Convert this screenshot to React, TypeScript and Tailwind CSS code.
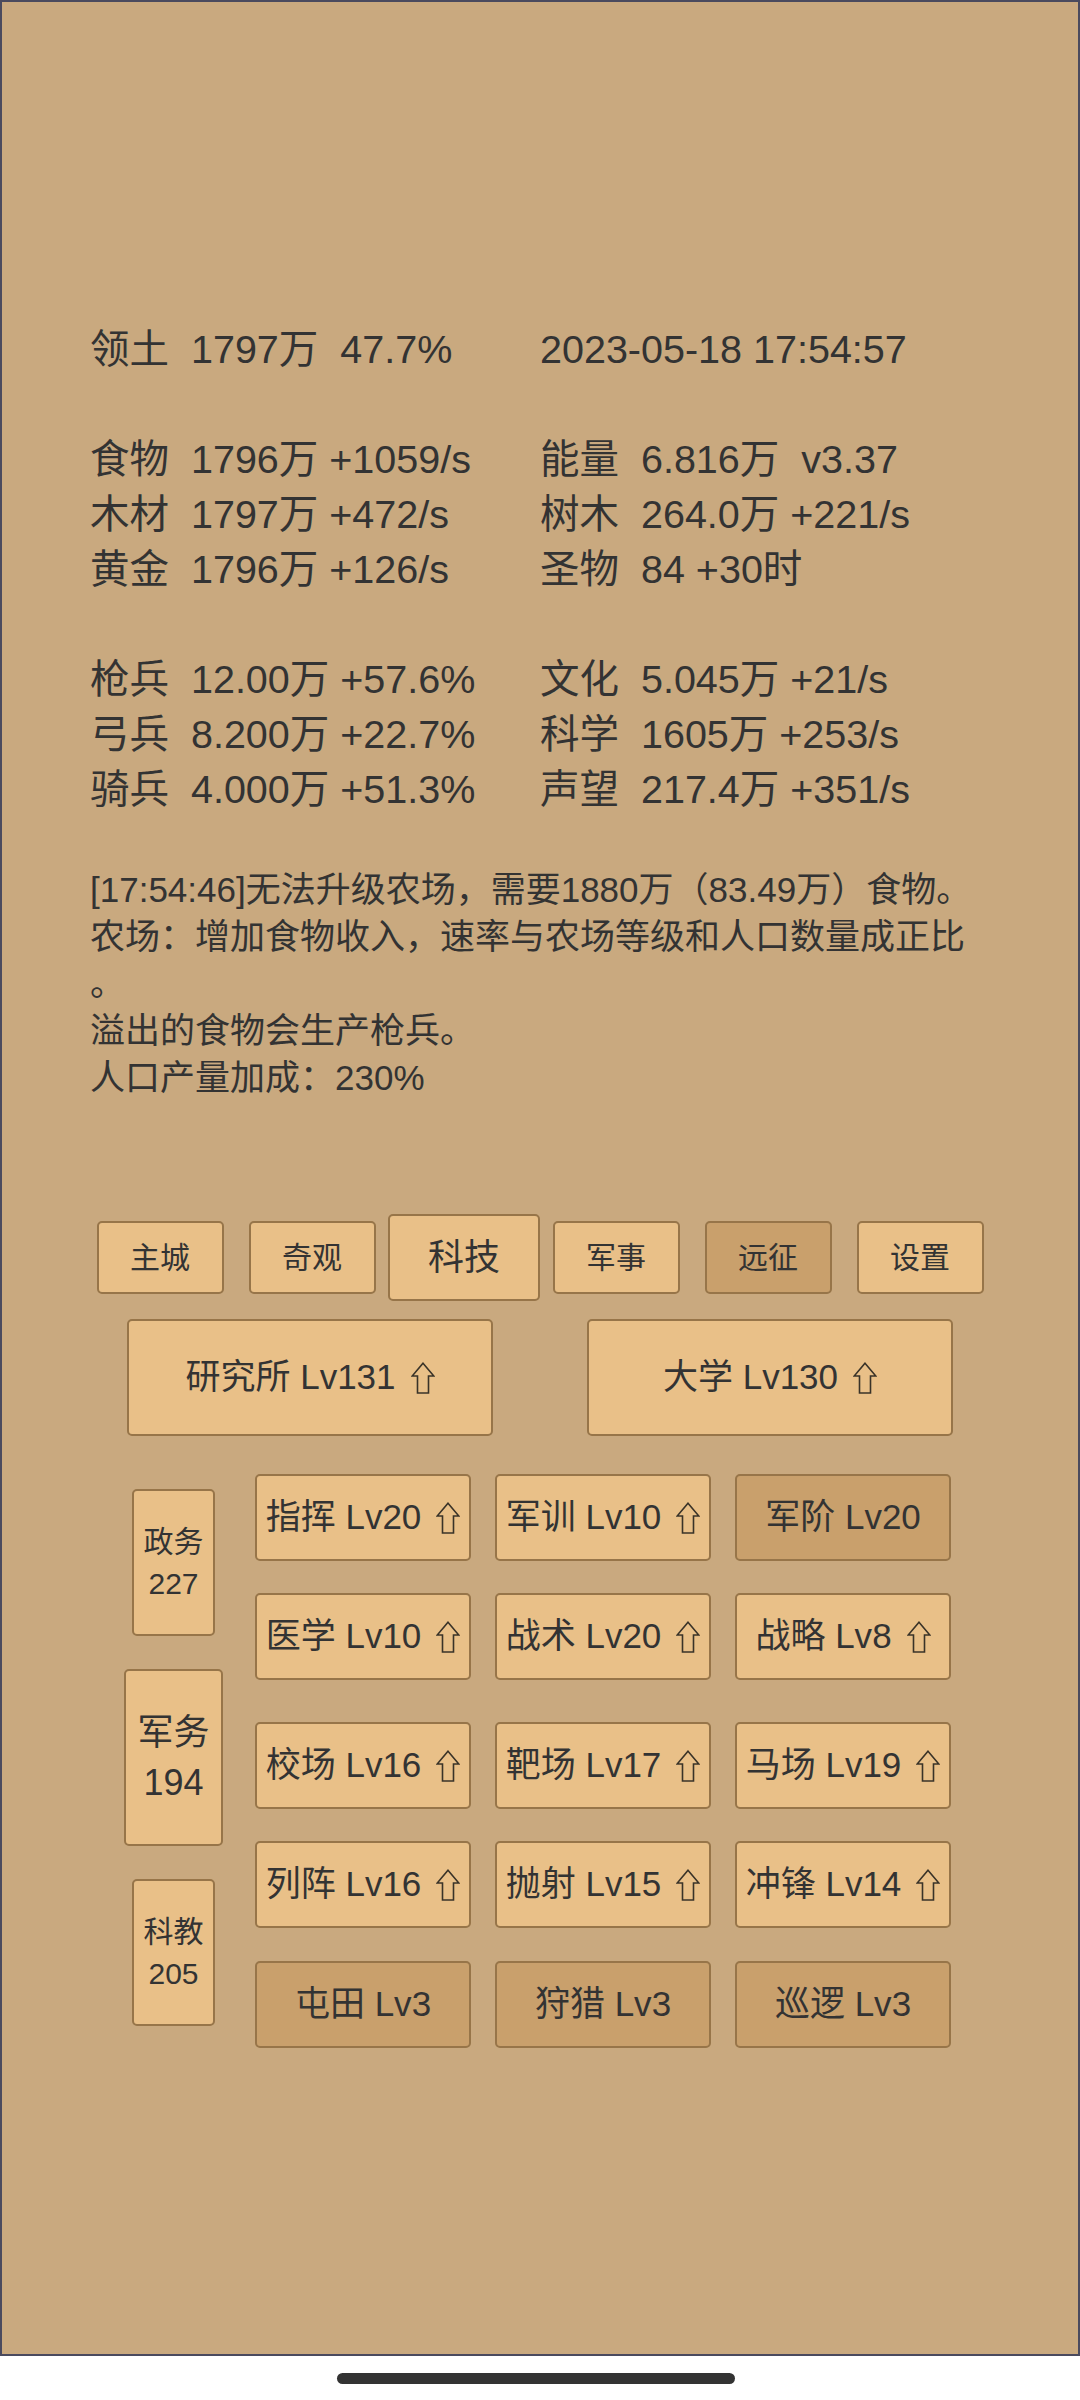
import React from 'react';
import clsx from 'clsx';

const stats: [string, string][][] = [
  [['领土  1797万  47.7%', '2023-05-18 17:54:57']],
  [
    ['食物  1796万 +1059/s', '能量  6.816万  v3.37'],
    ['木材  1797万 +472/s', '树木  264.0万 +221/s'],
    ['黄金  1796万 +126/s', '圣物  84 +30时'],
  ],
  [
    ['枪兵  12.00万 +57.6%', '文化  5.045万 +21/s'],
    ['弓兵  8.200万 +22.7%', '科学  1605万 +253/s'],
    ['骑兵  4.000万 +51.3%', '声望  217.4万 +351/s'],
  ],
];

const logLines = [
  '[17:54:46]无法升级农场，需要1880万（83.49万）食物。',
  '农场：增加食物收入，速率与农场等级和人口数量成正比',
  '。',
  '溢出的食物会生产枪兵。',
  '人口产量加成：230%',
];

const tabs = ['主城', '奇观', '科技', '军事', '远征', '设置'];

const UpArrow = () => (
  <svg width="24" height="32" viewBox="0 0 24 32" className="ml-[15px] shrink-0">
    <path
      d="M12 1.2 L22.8 14 H17.5 V31 H6.5 V14 H1.2 Z"
      fill="none"
      stroke="#3a3328"
      strokeWidth="1.6"
    />
  </svg>
);

interface BtnProps {
  dark?: boolean;
  className?: string;
  children: React.ReactNode;
}

const Btn: React.FC<BtnProps> = ({ dark, className, children }) => (
  <div
    className={clsx(
      'flex items-center justify-center whitespace-nowrap rounded-[5px] border-2 border-[#977549] text-[#333]',
      dark ? 'bg-[#c9a06c]' : 'bg-[#e9c088]',
      className
    )}
  >
    {children}
  </div>
);

const grid: { name: string; lv: number; up: boolean; dark?: boolean }[][] = [
  [
    { name: '指挥', lv: 20, up: true },
    { name: '军训', lv: 10, up: true },
    { name: '军阶', lv: 20, up: false, dark: true },
  ],
  [
    { name: '医学', lv: 10, up: true },
    { name: '战术', lv: 20, up: true },
    { name: '战略', lv: 8, up: true },
  ],
  [
    { name: '校场', lv: 16, up: true },
    { name: '靶场', lv: 17, up: true },
    { name: '马场', lv: 19, up: true },
  ],
  [
    { name: '列阵', lv: 16, up: true },
    { name: '抛射', lv: 15, up: true },
    { name: '冲锋', lv: 14, up: true },
  ],
  [
    { name: '屯田', lv: 3, up: false, dark: true },
    { name: '狩猎', lv: 3, up: false, dark: true },
    { name: '巡逻', lv: 3, up: false, dark: true },
  ],
];

// spacing above each row of the tech grid
const rowGaps = ['mt-0', 'mt-[32px]', 'mt-[42px]', 'mt-[32px]', 'mt-[33px]'];

export default function App() {
  return (
    <div className="w-[1080px] h-[2400px] bg-white font-['Liberation_Sans','Noto_Sans_CJK_SC',sans-serif] text-[#333]">
      <div className="h-[2356px] w-[1080px] border-2 border-[#4a4a5e] bg-[#c9a97f]">
        {/* stats */}
        <div className="pt-[320px] pl-[88px] text-[39.5px] leading-[55px]">
          {stats.map((group, gi) => (
            <div key={gi} className={gi > 0 ? 'mt-[55px]' : ''}>
              {group.map(([l, r], i) => (
                <div key={i} className="flex whitespace-pre">
                  <div className="w-[450px]">{l}</div>
                  <div>{r}</div>
                </div>
              ))}
            </div>
          ))}
        </div>

        {/* log */}
        <div className="mt-[49px] pl-[88px] text-[35px] leading-[47px] whitespace-nowrap">
          {logLines.map((t, i) => (
            <div key={i}>{t}</div>
          ))}
        </div>

        {/* tabs */}
        <div className="mt-[113px] flex justify-center items-center">
          {tabs.map((t) => (
            <div key={t} className="w-[152px] flex justify-center">
              {t === '科技' ? (
                <Btn className="w-[152px] h-[87px] text-[36px]">{t}</Btn>
              ) : (
                <Btn dark={t === '远征'} className="w-[127px] h-[73px] text-[30px]">
                  {t}
                </Btn>
              )}
            </div>
          ))}
        </div>

        {/* big buildings */}
        <div className="mt-[18px] flex justify-center gap-[94px] text-[35px]">
          <Btn className="w-[366px] h-[117px]">
            研究所 Lv131
            <UpArrow />
          </Btn>
          <Btn className="w-[366px] h-[117px]">
            大学 Lv130
            <UpArrow />
          </Btn>
        </div>

        {/* tech grid */}
        <div className="mt-[38px] pr-[5px] flex justify-center items-center gap-[32px]">
          <div className="w-[99px] mb-[7px] flex flex-col items-center gap-[33px]">
            <Btn className="w-[83px] h-[147px] flex-col text-[30px] leading-[42px]">
              <span>政务</span>
              <span>227</span>
            </Btn>
            <Btn className="w-[99px] h-[177px] flex-col text-[36px] leading-[50px]">
              <span>军务</span>
              <span>194</span>
            </Btn>
            <Btn className="w-[83px] h-[147px] flex-col text-[30px] leading-[42px]">
              <span>科教</span>
              <span>205</span>
            </Btn>
          </div>
          <div className="flex flex-col text-[35px]">
            {grid.map((row, ri) => (
              <div key={ri} className={clsx('flex gap-[24px]', rowGaps[ri])}>
                {row.map((b) => (
                  <Btn key={b.name} dark={b.dark} className="w-[216px] h-[87px]">
                    {b.name} Lv{b.lv}
                    {b.up && <UpArrow />}
                  </Btn>
                ))}
              </div>
            ))}
          </div>
        </div>
      </div>
      <div className="ml-[337px] mt-[17px] w-[398px] h-[11px] rounded-full bg-[#333]" />
    </div>
  );
}
